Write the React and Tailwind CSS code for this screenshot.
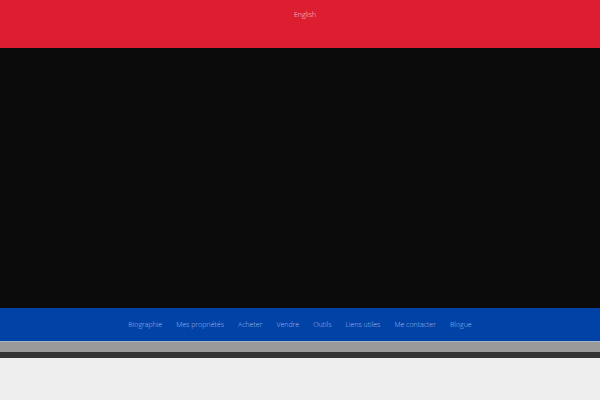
export default function App() {
  const items = ["Biographie", "Mes propriétés", "Acheter", "Vendre", "Outils", "Liens utiles", "Me contacter", "Blogue"];
  return (
    <div className="w-[600px] h-[400px] overflow-hidden bg-[#eeeeee]" style={{ fontFamily: '"Open Sans", sans-serif' }}>
      <div className="h-[48px] bg-[#dc1e30] flex justify-center pt-[10px] pl-[10px]">
        <span className="text-[7px] font-light text-[#f6dadd] leading-[10px]">English</span>
      </div>
      <div className="h-[260px] bg-[#0b0b0b]" />
      <div className="h-[33px] bg-[#0042a6] flex justify-center items-center gap-[14px]">
        {items.map((t) => (
          <span key={t} className="text-[7px] font-light text-[#a6bcec] leading-[10px]">{t}</span>
        ))}
      </div>
      <div className="h-px bg-[#a9b4c8]" />
      <div className="h-[10px] bg-[#9a9a9a]" />
      <div className="h-[6px] bg-[#333333]" />
    </div>
  );
}
